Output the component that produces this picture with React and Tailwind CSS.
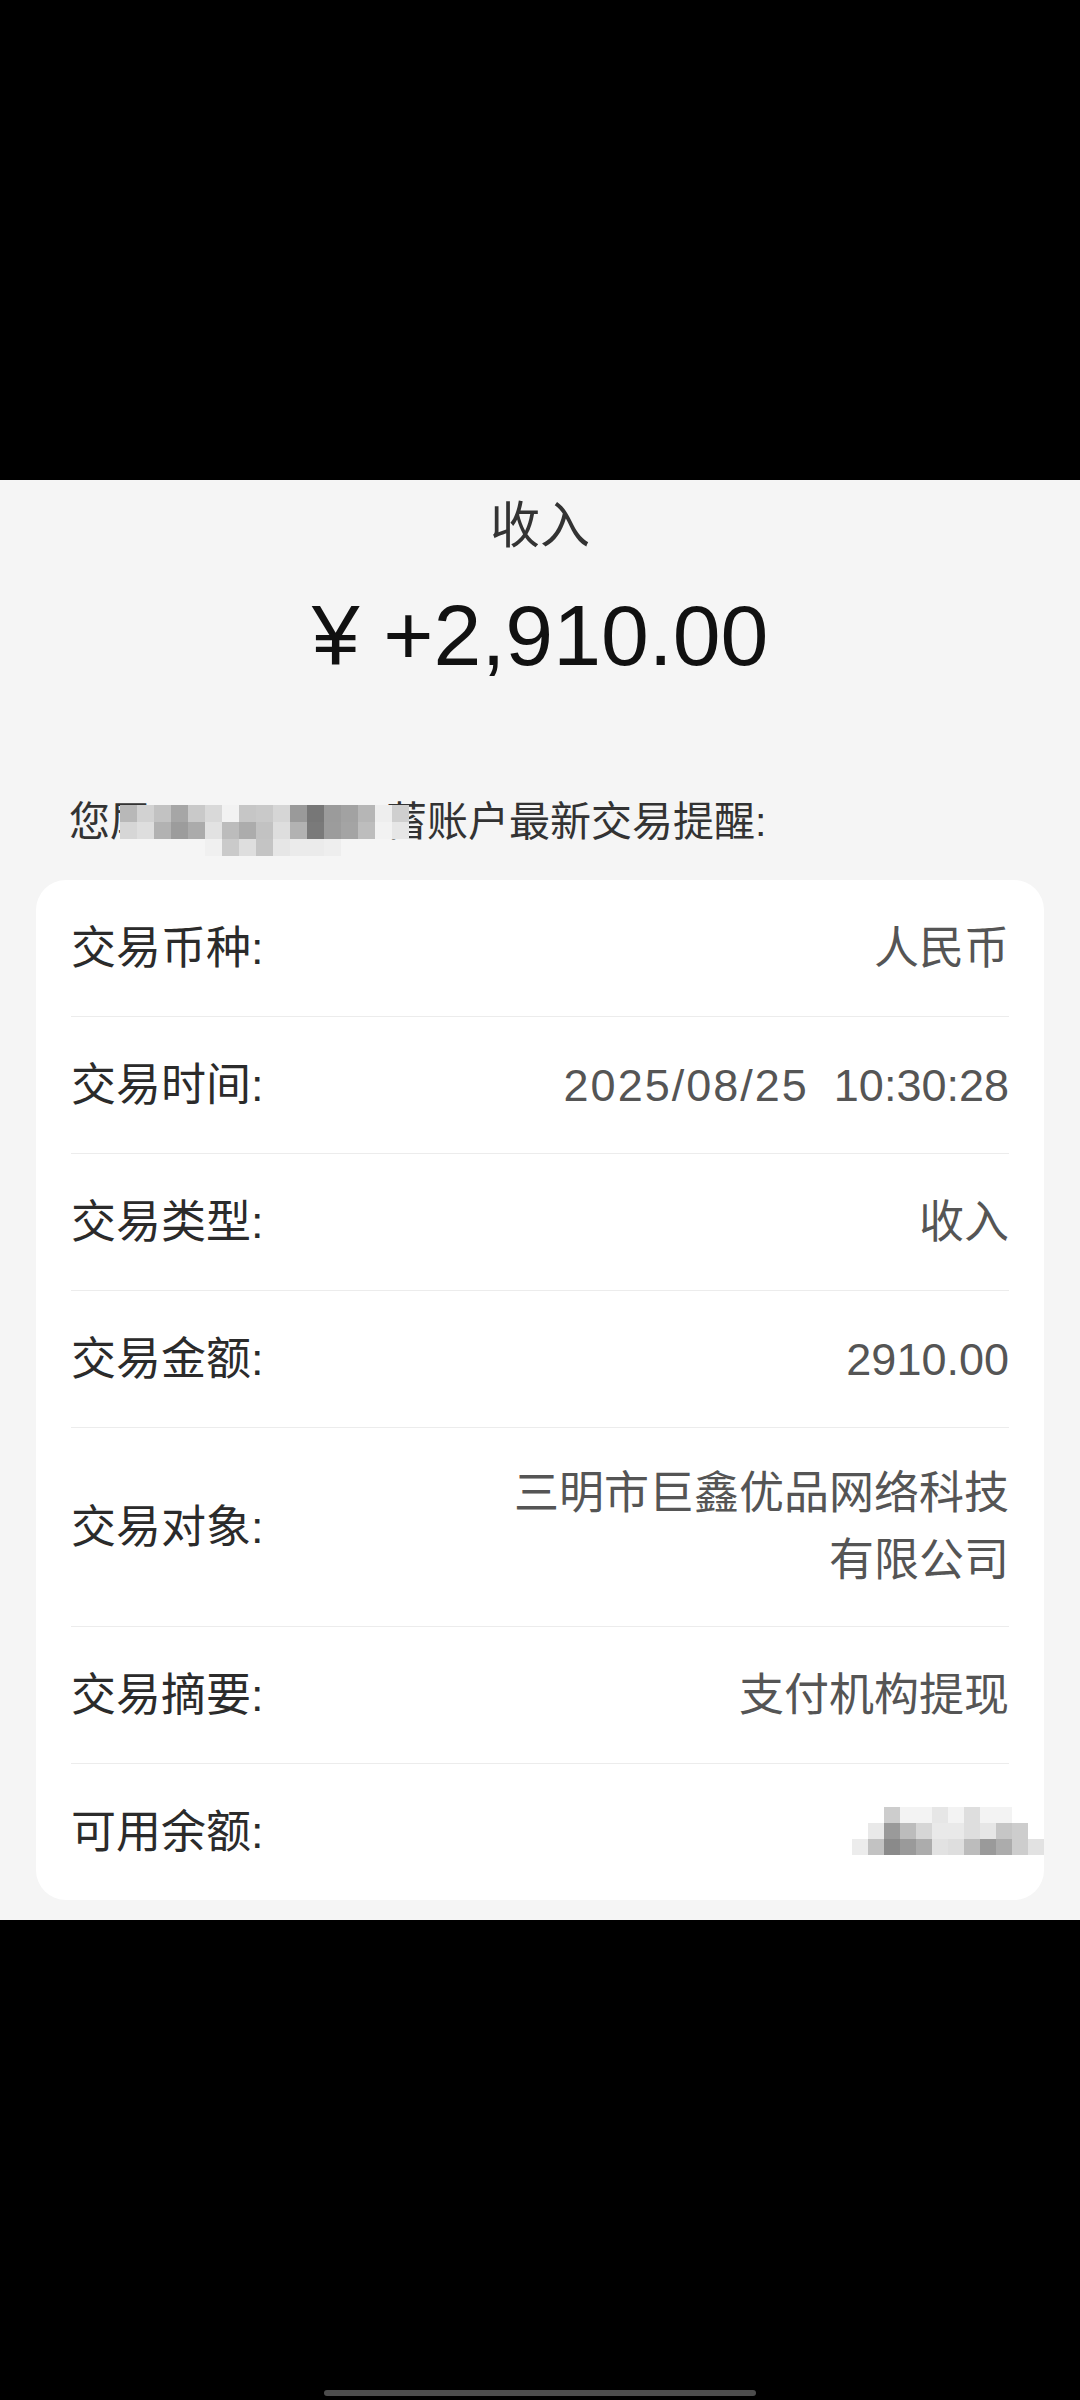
import React from "react";

const FONT = { fontFamily: '"Liberation Sans", "Noto Sans CJK SC", sans-serif' };

const hintMosaic = [
  ["#b8b8b8", "#d2d2d2", "#c2c2c2", "#a6a6a6", "#c9c9c9", "#d9d9d9", "#f2f2f2", "#c6c6c6", "#c9c9c9", "#d6d6d6", "#9a9a9a", "#777777", "#9b9b9b", "#a2a2a2", "#b6b6b6", "#eeeeee", "#cfcfcf"],
  ["#d6d6d6", "#dedede", "#b2b2b2", "#9c9c9c", "#ababab", "#e2e2e2", "#bcbcbc", "#acacac", "#c2c2c2", "#dedede", "#b2b2b2", "#7a7a7a", "#9c9c9c", "#a4a4a4", "#bdbdbd", "#f2f2f2", "#e6e6e6"],
  ["transparent", "transparent", "transparent", "transparent", "transparent", "#f0f0f0", "#cacaca", "#dedede", "#c4c4c4", "#e6e6e6", "#ebebeb", "#ebebeb", "#eeeeee", "transparent", "transparent", "transparent", "transparent"],
];

const balanceMosaic = [
  ["transparent", "transparent", "#cdcdcd", "#f3f3f3", "#f3f3f3", "#e6e6e6", "#f3f3f3", "#dedede", "#f3f3f3", "#f3f3f3", "transparent", "transparent"],
  ["transparent", "#e9e9e9", "#9a9a9a", "#bcbcbc", "#d6d6d6", "#e9e9e9", "#e9e9e9", "#dedede", "#e6e6e6", "#c6c6c6", "#cdcdcd", "transparent"],
  ["#ececec", "#c2c2c2", "#8a8a8a", "#9a9a9a", "#acacac", "#e2e2e2", "#dedede", "#bcbcbc", "#9a9a9a", "#acacac", "#cdcdcd", "#e2e2e2"],
];

function Mosaic({ grid, cell = 17 }) {
  return (
    <div className="flex flex-col">
      {grid.map((row, r) => (
        <div key={r} className="flex">
          {row.map((c, i) => (
            <div key={i} style={{ width: cell, height: cell, background: c }} />
          ))}
        </div>
      ))}
    </div>
  );
}

function Row({ label, children, last, double }) {
  return (
    <div
      className={
        "flex items-center justify-between " +
        (double ? "pt-[32px] pb-[32px] " : "pt-[35px] pb-[34px] ") +
        (last ? "" : "border-b border-[#ececec]")
      }
    >
      <div className="shrink-0 text-[45px] leading-[67px] text-[#2b2b2b]">{label}</div>
      <div className="max-w-[505px] text-right text-[45px] leading-[67px] text-[#555555]">
        {children}
      </div>
    </div>
  );
}

export default function App() {
  return (
    <div className="flex h-[2400px] w-[1080px] flex-col bg-black" style={FONT}>
      <div className="h-[480px] shrink-0 bg-black" />
      <div className="shrink-0 bg-[#f5f5f5] pt-[16px] pb-[20px]">
        <div className="text-center text-[50px] leading-[60px] text-[#333333]">收入</div>
        <div className="mt-[36px] text-center text-[86px] leading-none text-[#111111]">
          ¥ +2,910.00
        </div>
        <div className="mt-[120px] flex items-center pl-[69px] text-[41px] leading-[48px] text-[#333333]">
          <span>您尾</span>
          <span className="relative block h-[48px] w-[235px]">
            <span className="absolute left-[-31px] top-[7px]">
              <Mosaic grid={hintMosaic} />
            </span>
          </span>
          <span>蓄账户最新交易提醒:</span>
        </div>
        <div className="mx-[36px] mt-[34px] rounded-[30px] bg-white px-[35px]">
          <Row label="交易币种:">人民币</Row>
          <Row label="交易时间:">
            <span className="whitespace-pre">
              <span className="tracking-[2px]">2025/08/25</span>
              {"  "}10:30:28
            </span>
          </Row>
          <Row label="交易类型:">收入</Row>
          <Row label="交易金额:">2910.00</Row>
          <Row label="交易对象:" double>三明市巨鑫优品网络科技有限公司</Row>
          <Row label="交易摘要:">支付机构提现</Row>
          <Row label="可用余额:" last>
            <div className="relative h-[67px] w-[170px]">
              <div className="absolute right-[-35px] top-[8px]">
                <Mosaic grid={balanceMosaic} cell={16} />
              </div>
            </div>
          </Row>
        </div>
      </div>
      <div className="flex flex-1 flex-col items-center justify-end bg-black pb-[4px]">
        <div className="h-[6px] w-[432px] rounded-full bg-[#4d4d4d]" />
      </div>
    </div>
  );
}
